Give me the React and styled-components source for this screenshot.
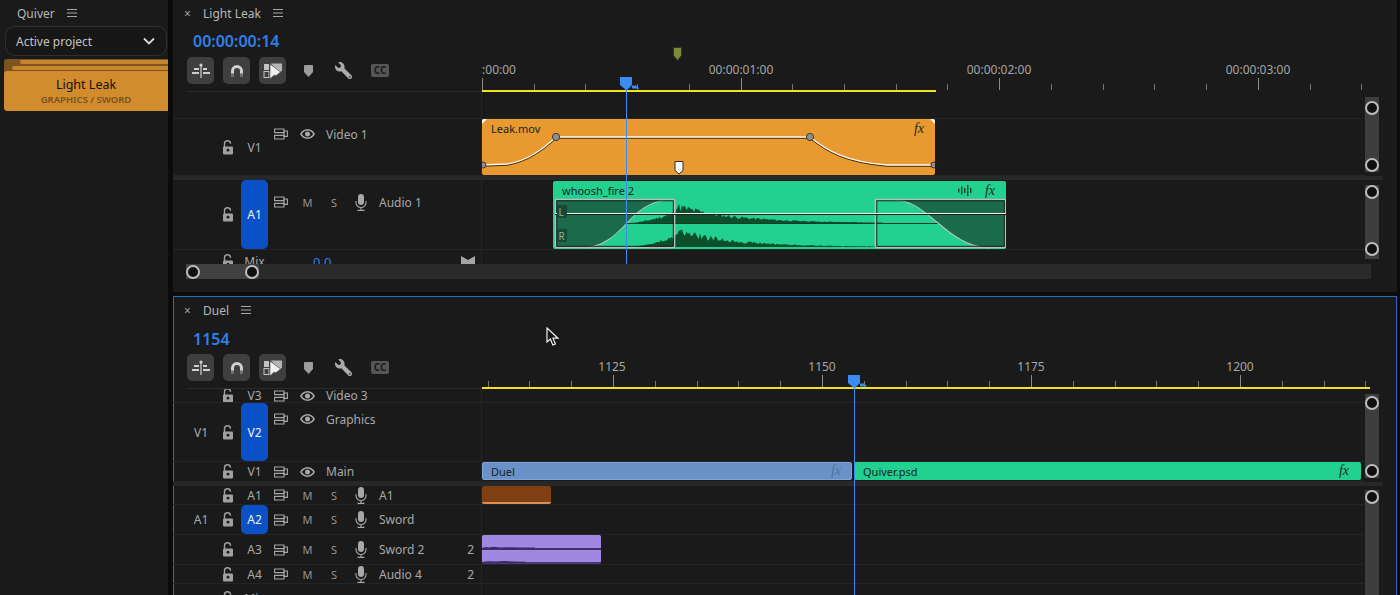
import styled, { createGlobalStyle } from "styled-components";
import { FaWrench } from "react-icons/fa";

const GlobalStyle = createGlobalStyle`
  html, body { margin: 0; padding: 0; background: #0b0b0b; }
  body { font-family: "Noto Sans", "Open Sans", sans-serif; }
`;

const TICK = 51.72;
const FRAME_TICK = 41.8;

// deterministic bumpy waveform, returned as an svg area path
function wavePath(baseline, maxH, seed) {
  let s = seed;
  let d = `M75 ${baseline}`;
  for (let x = 75; x < 330; x += 1.5) {
    s = (s * 9301 + 49297) % 233280;
    const r = 0.55 + 0.45 * (s / 233280);
    const env = x < 122 ? Math.pow((x - 75) / 47, 1.6) * 0.6 : Math.exp(-(x - 122) / 58);
    d += ` L${x} ${(baseline - maxH * env * r).toFixed(1)}`;
  }
  return d + ` L330 ${baseline} Z`;
}

export default function App() {
  return (
    <Screen>
      <GlobalStyle />
      <Quiver>
        <PanelHead $h={26}>
          <QuiverTitle>Quiver</QuiverTitle>
          <MenuIcon />
        </PanelHead>
        <ProjectSelect>
          Active project
          <svg width="12" height="8" viewBox="0 0 12 8"><path d="M1 1.5l5 5 5-5" fill="none" stroke="#d8d8d8" strokeWidth="1.8" /></svg>
        </ProjectSelect>
        <CardStack>
          <CardEdge $inset={16} />
          <CardEdge $inset={8} />
          <Card>
            <CardName>Light Leak</CardName>
            <CardPath>GRAPHICS / SWORD</CardPath>
          </Card>
        </CardStack>
      </Quiver>

      <Timelines>
        <Panel $h={292}>
          <PanelHead $h={26}>
            <CloseMark>×</CloseMark>
            <PanelTitle>Light Leak</PanelTitle>
            <MenuIcon />
          </PanelHead>
          <TimeHeader $h={66}>
            <ToolCell>
              <Timecode>00:00:00:14</Timecode>
              <Tools />
            </ToolCell>
            <Ruler>
              <RulerTicks start={0} step={TICK} major={5} />
              <OliveMarker><svg width="9" height="14" viewBox="0 0 9 14"><path d="M.5.5h8v8l-4 5-4-5z" fill="#7d8b36" stroke="#33361f" /></svg></OliveMarker>
              <RulerLabel $x={17}>:00:00</RulerLabel>
              <RulerLabel $x={259}>00:00:01:00</RulerLabel>
              <RulerLabel $x={517}>00:00:02:00</RulerLabel>
              <RulerLabel $x={776}>00:00:03:00</RulerLabel>
              <WorkArea $w={454} />
            </Ruler>
          </TimeHeader>
          <TrackArea $h={172}>
            <Row $h={27} />
            <Row $h={57} lane={<LeakClip />}>
              <Source />
              <Lock />
              <Target>V1</Target>
              <VideoControls name="Video 1" top={5} />
            </Row>
            <TrackDivider />
            <Row $h={70} lane={<WhooshClip />}>
              <Source />
              <Lock />
              <Target $on>A1</Target>
              <AudioControls name="Audio 1" top={12} />
            </Row>
            <MixRow h={24} full />
            <VBar $top={5} $h={75} $pad="4px 0 0"><Knob /><Knob /></VBar>
            <VBar $top={93} $h={74} $pad="0 0 3px"><Knob /><Knob /></VBar>
          </TrackArea>
          <HScroll>
            <HThumb><Knob /><Knob /></HThumb>
          </HScroll>
          <Playhead x={453} top={77} h={187} />
        </Panel>

        <Panel $h={310} $active>
          <PanelHead $h={28}>
            <CloseMark>×</CloseMark>
            <PanelTitle>Duel</PanelTitle>
            <MenuIcon />
          </PanelHead>
          <TimeHeader $h={65}>
            <ToolCell>
              <Timecode>1154</Timecode>
              <Tools />
            </ToolCell>
            <Ruler>
              <RulerTicks start={5.6} step={FRAME_TICK} major={5} majorAt={3} />
              <RulerLabel $x={130}>1125</RulerLabel>
              <RulerLabel $x={340}>1150</RulerLabel>
              <RulerLabel $x={549}>1175</RulerLabel>
              <RulerLabel $x={758}>1200</RulerLabel>
              <WorkArea $w={888} />
            </Ruler>
          </TimeHeader>
          <TrackArea $h={206}>
            <Row $h={14}>
              <Source />
              <Lock />
              <Target>V3</Target>
              <VideoControls name="Video 3" />
            </Row>
            <Row $h={59}>
              <Source>V1</Source>
              <Lock />
              <Target $on>V2</Target>
              <VideoControls name="Graphics" top={6} />
            </Row>
            <Row $h={20} lane={
              <>
                <DuelClip>
                  <ClipName>Duel</ClipName>
                  <Fx $dim>fx</Fx>
                </DuelClip>
                <PsdClip>
                  <ClipName>Quiver.psd</ClipName>
                  <Fx>fx</Fx>
                </PsdClip>
              </>
            }>
              <Source />
              <Lock />
              <Target>V1</Target>
              <VideoControls name="Main" />
            </Row>
            <TrackDivider />
            <Row $h={19} lane={<BrownClip />}>
              <Source />
              <Lock />
              <Target>A1</Target>
              <AudioControls name="A1" />
            </Row>
            <Row $h={30}>
              <Source>A1</Source>
              <Lock />
              <Target $on>A2</Target>
              <AudioControls name="Sword" />
            </Row>
            <Row $h={30} lane={<PurpleClip />}>
              <Source />
              <Lock />
              <Target>A3</Target>
              <AudioControls name="Sword 2" />
              <Channels>2</Channels>
            </Row>
            <Row $h={19}>
              <Source />
              <Lock />
              <Target>A4</Target>
              <AudioControls name="Audio 4" />
              <Channels>2</Channels>
            </Row>
            <MixRow h={30} />
            <VBar $top={5} $h={84} $pad="2px 0 0"><Knob /><Knob /></VBar>
            <VBar $top={101} $h={120} $pad="0"><Knob /></VBar>
          </TrackArea>
          <Playhead x={681} top={79} h={230} />
          <Cursor>
            <svg width="14" height="20" viewBox="0 0 14 20"><path d="M1 1v14l3.4-3 2.4 6 2.6-1-2.4-5.8H12z" fill="#141414" stroke="#f2f2f2" strokeWidth="1.2" /></svg>
          </Cursor>
        </Panel>
      </Timelines>
    </Screen>
  );
}

function Tools() {
  return (
    <Toolbar>
      <ToolButton $box>
        <svg width="18" height="16" viewBox="0 0 18 16" fill="#cfcfcf">
          <rect x="8.4" y="1" width="1.2" height="14" />
          <circle cx="9" cy="2" r="1.6" />
          <rect x="2" y="5" width="5" height="2" /><rect x="0" y="9" width="7" height="2" />
          <rect x="11" y="5" width="4" height="2" /><rect x="11" y="9" width="7" height="2" />
        </svg>
      </ToolButton>
      <ToolButton $box>
        <svg width="14" height="14" viewBox="0 0 14 14" fill="none">
          <path d="M2.5 13V7a4.5 4.5 0 0 1 9 0v6" stroke="#d0d0d0" strokeWidth="3" />
          <path d="M2.5 13V9.5M11.5 13V9.5" stroke="#6f6f6f" strokeWidth="3" />
        </svg>
      </ToolButton>
      <ToolButton $box>
        <svg width="20" height="18" viewBox="0 0 20 18">
          <rect x="1" y="2" width="5" height="6" fill="#c4c4c4" />
          <rect x="1" y="9.5" width="5" height="6" fill="none" stroke="#c4c4c4" />
          <path d="M8 1.5h11v7l-3 3z" fill="#b5b5b5" />
          <path d="M7 2v15l3.8-3.6 2.6 0L17.5 10z" fill="#f0f0f0" stroke="#3f3f3f" strokeWidth=".6" />
        </svg>
      </ToolButton>
      <ToolButton>
        <svg width="9" height="12" viewBox="0 0 9 12"><path d="M0 1a1 1 0 0 1 1-1h7a1 1 0 0 1 1 1v6l-4.500 5L0 7z" fill="#9c9c9c" /></svg>
      </ToolButton>
      <ToolButton><Wrench /></ToolButton>
      <ToolButton><CcBadge>CC</CcBadge></ToolButton>
    </Toolbar>
  );
}

function RulerTicks({ start, step, major, majorAt = 0 }) {
  const ticks = [];
  for (let i = 0; start + i * step < 888; i++) {
    ticks.push({ x: Math.round(start + i * step), big: (i - majorAt) % major === 0 });
  }
  return (
    <TickLayer width="915" height="65">
      {ticks.map((t) => (
        <line key={t.x} x1={t.x + 0.5} x2={t.x + 0.5} y1={t.big ? 51 : 57} y2="63" stroke={t.big ? "#8a8a8a" : "#757575"} />
      ))}
    </TickLayer>
  );
}

function Row({ $h, lane, children }) {
  return (
    <RowBox $h={$h}>
      <RowHeader>{children}</RowHeader>
      <Lane>{lane}</Lane>
    </RowBox>
  );
}

function MixRow({ h, full }) {
  return (
    <Row $h={h}>
      <Source />
      <Lock />
      <Target>Mix</Target>
      {full && <MixValue>0.0</MixValue>}
      {full && (
        <MixEnd>
          <svg width="14" height="12" viewBox="0 0 14 12"><path d="M0 0l7 4 7-4v12H0z" fill="#a5a5a5" /></svg>
        </MixEnd>
      )}
    </Row>
  );
}

function VideoControls({ name, top }) {
  return (
    <Controls $top={top}>
      <Slot $w={26}><SyncIcon /></Slot>
      <Slot $w={26}><EyeIcon /></Slot>
      <TrackName $gap={6}>{name}</TrackName>
    </Controls>
  );
}

function AudioControls({ name, top }) {
  return (
    <Controls $top={top}>
      <Slot $w={26}><SyncIcon /></Slot>
      <Slot $w={27} $letter>M</Slot>
      <Slot $w={26} $letter>S</Slot>
      <Slot $w={28}><MicIcon /></Slot>
      <TrackName $gap={4}>{name}</TrackName>
    </Controls>
  );
}

function LeakClip() {
  const curve = "M0 46 L25 45 C45 42 60 31 74 18 L328 18 C345 32 365 43 405 46 L453 46";
  return (
    <OrangeClip>
      <ClipHead>
        <ClipName>Leak.mov</ClipName>
        <Fx>fx</Fx>
      </ClipHead>
      <ClipArt width="453" height="56" viewBox="0 0 453 56">
        <path d="M0 0h5L0 5zM453 0h-5l5 5z" fill="#f4f4f4" />
        <path d={curve} transform="translate(0 1)" fill="none" stroke="#3a2a12" strokeWidth="1.4" />
        <path d={curve} fill="none" stroke="#fbf7ea" strokeWidth="1.4" />
        <circle cx="74" cy="18" r="3.6" fill="#8f8f8f" stroke="#3a3a3a" />
        <circle cx="328" cy="18" r="3.6" fill="#8f8f8f" stroke="#3a3a3a" />
        <circle cx="1" cy="46" r="3" fill="#8f8f8f" stroke="#3a3a3a" />
        <circle cx="452" cy="46" r="3" fill="#8f8f8f" stroke="#3a3a3a" />
        <path d="M193 42.5h8v9l-4 3.500-4-3.500z" fill="#f7f7f7" stroke="#2a2a2a" />
      </ClipArt>
    </OrangeClip>
  );
}

function WhooshClip() {
  return (
    <GreenClip>
      <ClipHead>
        <ClipName>whoosh_fire 2</ClipName>
        <ClipFlags>
          <svg width="14" height="11" viewBox="0 0 14 11" fill="#14442f">
            <rect x="0" y="3.500" width="1.400" height="4" /><rect x="3" y="1.500" width="1.400" height="8" />
            <rect x="6" y="3" width="1.400" height="5" /><rect x="9" y="0" width="1.400" height="11" />
            <rect x="12" y="3" width="1.400" height="5" />
          </svg>
          <Fx>fx</Fx>
        </ClipFlags>
      </ClipHead>
      <ClipArt width="453" height="68" viewBox="0 0 453 68">
        <path d={wavePath(42, 22, 11)} fill="#0c4f2b" />
        <path d={wavePath(66, 21, 47)} fill="#0c4f2b" />
        <rect x="2" y="42" width="451" height="1" fill="#0d3b27" />
        <path d="M2 19H112C95 22 85 30 74 42 62 55 50 66 30 67H2Z" fill="#1c6a4c" />
        <path d="M339 19C360 19 370 30 385 42 400 55 415 66 436 67H452V19Z" fill="#1c6a4c" />
        <path d="M112 19C95 22 85 30 74 42 62 55 50 66 30 67" fill="none" stroke="#a8c9ba" strokeWidth="1.100" />
        <path d="M339 19C360 19 370 30 385 42 400 55 415 66 436 67" fill="none" stroke="#a8c9ba" strokeWidth="1.100" />
        <rect x="2.500" y="18.500" width="119" height="48" rx="1" fill="none" stroke="#bdbdbd" strokeWidth="1.600" />
        <rect x="3.800" y="19.800" width="116.500" height="45.500" fill="none" stroke="#0f1a15" strokeWidth=".9" />
        <rect x="322.500" y="18.500" width="130" height="48" rx="1" fill="none" stroke="#bdbdbd" strokeWidth="1.600" />
        <rect x="323.800" y="19.800" width="127.500" height="45.500" fill="none" stroke="#0f1a15" strokeWidth=".9" />
        <rect x="2" y="33" width="451" height="1" fill="#1a1a1a" />
        <rect x="2" y="32" width="451" height="1" fill="#f1f1f1" />
        <rect x="4" y="24" width="10" height="13" fill="#174a36" />
        <rect x="4" y="48" width="10" height="13" fill="#174a36" />
        <ChannelText x="5.500" y="35">L</ChannelText>
        <ChannelText x="5.500" y="59">R</ChannelText>
      </ClipArt>
    </GreenClip>
  );
}

function PurpleClip() {
  return (
    <VioletClip>
      <ClipArt width="119" height="29" viewBox="0 0 119 29">
        <path d="M0 13l4-1 3 .6 5-.8 6 .8 9-.4 12 .2 14 .2V14H0zM0 27l6-.8 7 .4 9-.6 10 .6 12 .2V28H0z" fill="#3a2b63" />
      </ClipArt>
    </VioletClip>
  );
}

function SyncIcon() {
  return (
    <svg width="14" height="12" viewBox="0 0 14 12" fill="none" stroke="#a8a8a8" strokeWidth="1.100">
      <path d="M.6 1h9.400v3.600H.6zM.6 7.400h9.400V11H.6z" />
      <path d="M10 3h3.400v5.400H10z" />
    </svg>
  );
}

function EyeIcon() {
  return (
    <svg width="15" height="10" viewBox="0 0 15 10" fill="#a8a8a8">
      <path fillRule="evenodd" d="M7.500 0C4 0 1.400 2.300 0 5c1.400 2.700 4 5 7.500 5S13.600 7.700 15 5C13.600 2.300 11 0 7.500 0zm0 1.500C5.200 1.500 3.200 2.900 1.900 5c1.300 2.100 3.300 3.500 5.600 3.500S11.800 7.100 13.100 5C11.800 2.900 9.800 1.500 7.500 1.500z" />
      <circle cx="7.500" cy="5" r="2.500" />
    </svg>
  );
}

function MicIcon() {
  return (
    <svg width="12" height="17" viewBox="0 0 12 17" fill="none" stroke="#a8a8a8">
      <rect x="3" y="0" width="6" height="11" rx="3" fill="#a8a8a8" stroke="none" />
      <path d="M1 7v1.500a5 5 0 0 0 10 0V7M6 13.500V16M2.500 16.400h7" strokeWidth="1.100" />
    </svg>
  );
}

function MenuIcon() {
  return (
    <MenuGlyph width="10" height="8" viewBox="0 0 10 8">
      <path d="M0 .5h10M0 4h10M0 7.500h10" stroke="#a8a8a8" />
    </MenuGlyph>
  );
}

function Lock() {
  return (
    <LockSlot>
      <svg width="12" height="15" viewBox="0 0 12 15">
        <path d="M2.500 7V3.800a3 3 0 0 1 6 0" fill="none" stroke="#a0a0a0" strokeWidth="1.400" />
        <rect x="1" y="6.500" width="10" height="8" rx="1" fill="#a0a0a0" />
        <circle cx="6" cy="10.200" r="1.400" fill="#1a1a1a" />
      </svg>
    </LockSlot>
  );
}

function Playhead({ x, top, h }) {
  return (
    <PlayLine $x={x} $top={top} $h={h}>
      <PlayCap width="20" height="14" viewBox="0 0 20 14">
        <path d="M0 0h12v8l-5.500 5.500L0 8z" fill="#3b8bf0" />
        <path d="M12 8.500h4l3.500 3h-7.500z" fill="#3b8bf0" />
      </PlayCap>
    </PlayLine>
  );
}

const Screen = styled.div`
  width: 1400px;
  height: 595px;
  overflow: hidden;
  display: flex;
  gap: 5px;
  background: #0b0b0b;
`;

const Quiver = styled.aside`
  width: 168px;
  flex: none;
  background: #1a1a1a;
  display: flex;
  flex-direction: column;
`;

const PanelHead = styled.header`
  height: ${(p) => p.$h}px;
  flex: none;
  display: flex;
  align-items: center;
  color: #b5b5b5;
  font-size: 12px;
`;

const QuiverTitle = styled.span`
  margin-left: 17px;
  font-size: 12px;
  color: #b8b8b8;
`;

const MenuGlyph = styled.svg`
  margin-left: 12px;
`;

const ProjectSelect = styled.div`
  margin-left: 5px;
  width: 162px;
  height: 30px;
  box-sizing: border-box;
  border: 1px solid #303030;
  border-radius: 10px;
  background: #171717;
  display: flex;
  align-items: center;
  justify-content: space-between;
  padding: 0 11px 0 10px;
  color: #c4c4c4;
  font-size: 12px;
`;

const CardStack = styled.div`
  margin: 3px 0 0 4px;
  width: 164px;
  background: #7d5420;
  border-radius: 3px 0 0 3px;
  display: flex;
  flex-direction: column;
  gap: 1px;
`;

const CardEdge = styled.div`
  height: 4px;
  margin-left: ${(p) => p.$inset}px;
  margin-top: 1px;
  background: #c6862e;
  border-radius: 2px 0 0 2px;
`;

const Card = styled.div`
  height: 40px;
  background: #d18c2e;
  border-radius: 3px 0 0 4px;
  display: flex;
  flex-direction: column;
  align-items: center;
  justify-content: center;
`;

const CardName = styled.div`
  font-size: 12.500px;
  line-height: 17px;
  color: #140e04;
`;

const CardPath = styled.div`
  font-size: 9.500px;
  font-weight: 600;
  line-height: 13px;
  color: #76511d;
`;

const Timelines = styled.main`
  width: 1224px;
  flex: none;
  display: flex;
  flex-direction: column;
  gap: 4px;
`;

const Panel = styled.section`
  position: relative;
  flex: none;
  height: ${(p) => p.$h}px;
  overflow: hidden;
  background: #1a1a1a;
  box-shadow: ${(p) => (p.$active ? "inset 0 0 0 1px #2a6cbb" : "none")};
`;

const CloseMark = styled.span`
  margin-left: 11px;
  width: 8px;
  font-size: 12px;
  color: #a0a0a0;
`;

const PanelTitle = styled.span`
  margin-left: 11px;
  font-size: 12px;
  color: #b8b8b8;
`;

const TimeHeader = styled.div`
  display: grid;
  grid-template-columns: 309px 1fr;
  height: ${(p) => p.$h}px;
`;

const ToolCell = styled.div`
  margin-left: 14px;
  box-sizing: border-box;
  padding-bottom: 7px;
  border-bottom: 1px solid #2a2a2a;
  display: flex;
  flex-direction: column;
  justify-content: space-between;
`;

const Timecode = styled.div`
  height: 30px;
  padding-left: 6px;
  line-height: 30px;
  font-size: 16px;
  font-weight: 600;
  color: #2f80e8;
`;

const Toolbar = styled.div`
  display: flex;
  gap: 9px;
`;

const ToolButton = styled.div`
  width: 27px;
  height: 27px;
  display: flex;
  align-items: center;
  justify-content: center;
  border-radius: 5px;
  background: ${(p) => (p.$box ? "#3f3f3f" : "transparent")};
`;

const Wrench = styled(FaWrench)`
  width: 17px;
  height: 17px;
  margin-right: 2px;
  color: #ababab;
  transform: scaleX(-1);
`;

const CcBadge = styled.span`
  width: 18px;
  height: 13px;
  margin-right: 1px;
  border-radius: 2px;
  background: #565656;
  color: #1a1a1a;
  font-size: 10px;
  line-height: 13px;
  font-weight: 700;
  text-align: center;
`;

const Ruler = styled.div`
  position: relative;
`;

const TickLayer = styled.svg`
  position: absolute;
  left: 0;
  bottom: 0;
`;

const RulerLabel = styled.span`
  position: absolute;
  left: ${(p) => p.$x}px;
  bottom: 14px;
  transform: translateX(-50%);
  font-size: 12px;
  line-height: 16px;
  color: #a6a6a6;
`;

const WorkArea = styled.div`
  position: absolute;
  left: 0;
  bottom: 0;
  width: ${(p) => p.$w}px;
  height: 2px;
  background: #efe41d;
`;

const OliveMarker = styled.div`
  position: absolute;
  left: 191px;
  top: 18px;
  height: 14px;
`;

const TrackArea = styled.div`
  position: relative;
  height: ${(p) => p.$h}px;
  overflow: hidden;
`;

const RowBox = styled.div`
  height: ${(p) => p.$h}px;
  box-sizing: border-box;
  margin-right: 32px;
  display: grid;
  grid-template-columns: 309px 1fr;
  grid-template-rows: minmax(0, 1fr);
  border-bottom: 1px solid #252525;
  overflow: hidden;
`;

const RowHeader = styled.div`
  display: flex;
  align-items: center;
  min-height: 0;
  color: #a8a8a8;
  font-size: 12px;
  border-right: 1px solid #252525;
`;

const Lane = styled.div`
  position: relative;
`;

const TrackDivider = styled.div`
  height: 4px;
  margin-right: 14px;
  background: #282828;
`;

const Source = styled.span`
  width: 28px;
  padding-left: 14px;
  flex: none;
  text-align: center;
`;

const LockSlot = styled.span`
  width: 26px;
  flex: none;
  display: flex;
  justify-content: center;
`;

const Target = styled.span`
  width: 27px;
  flex: none;
  align-self: stretch;
  display: flex;
  align-items: center;
  justify-content: center;
  border-radius: 5px;
  background: ${(p) => (p.$on ? "#0a50c6" : "transparent")};
  color: ${(p) => (p.$on ? "#f0f0f0" : "inherit")};
`;

const Controls = styled.div`
  display: flex;
  align-items: center;
  height: 20px;
  flex: none;
  align-self: ${(p) => (p.$top == null ? "center" : "flex-start")};
  margin-top: ${(p) => p.$top ?? 0}px;
`;

const Slot = styled.span`
  width: ${(p) => p.$w}px;
  flex: none;
  display: flex;
  justify-content: center;
  font-size: 11px;
  color: #959595;
`;

const TrackName = styled.span`
  margin-left: ${(p) => p.$gap}px;
  font-size: 12px;
  white-space: nowrap;
`;

const Channels = styled.span`
  margin-left: auto;
  padding-right: 7px;
`;

const MixValue = styled.span`
  margin-left: 45px;
  font-size: 13px;
  color: #2f80e8;
`;

const MixEnd = styled.span`
  margin-left: auto;
  padding-right: 6px;
  display: flex;
`;

const VBar = styled.div`
  position: absolute;
  right: 18px;
  top: ${(p) => p.$top}px;
  width: 14px;
  height: ${(p) => p.$h}px;
  box-sizing: border-box;
  padding: ${(p) => p.$pad};
  background: #3e3e3e;
  display: flex;
  flex-direction: column;
  justify-content: space-between;
`;

const Knob = styled.span`
  width: 14px;
  height: 14px;
  box-sizing: border-box;
  flex: none;
  border: 2px solid #bdbdbd;
  border-radius: 50%;
  background: #101010;
`;

const HScroll = styled.div`
  margin: 0 26px 0 13px;
  height: 15px;
  background: #2a2a2a;
`;

const HThumb = styled.div`
  width: 73px;
  height: 15px;
  background: #404040;
  display: flex;
  align-items: center;
  justify-content: space-between;
`;

const Clip = styled.div`
  position: absolute;
  top: 0;
  box-sizing: border-box;
  border-radius: 2px;
  overflow: hidden;
`;

const OrangeClip = styled(Clip)`
  left: 0;
  width: 453px;
  height: 56px;
  background: #e89a30;
`;

const GreenClip = styled(Clip)`
  top: 1px;
  left: 71px;
  width: 453px;
  height: 68px;
  background: #22d08f;
`;

const DuelClip = styled(Clip)`
  left: 0;
  width: 370px;
  height: 18px;
  display: flex;
  align-items: center;
  justify-content: space-between;
  padding: 0 10px 0 8px;
  background: #6a92c8;
  border: 1px solid #7ea4d6;
`;

const PsdClip = styled(Clip)`
  left: 372px;
  width: 507px;
  height: 18px;
  display: flex;
  align-items: center;
  justify-content: space-between;
  padding: 0 12px 0 9px;
  background: #22d08f;
`;

const BrownClip = styled(Clip)`
  left: 0;
  width: 69px;
  height: 18px;
  background: #7f3f12;
  border-bottom: 2px solid #d98f55;
`;

const VioletClip = styled(Clip)`
  left: 0;
  width: 119px;
  height: 29px;
  background: linear-gradient(
    #a088e2 0 13px,
    #3f2f6a 13px 15px,
    #a088e2 15px 27px,
    #4a3a7a 27px
  );
`;

const ClipHead = styled.div`
  position: relative;
  z-index: 1;
  display: flex;
  align-items: center;
  justify-content: space-between;
  height: 19px;
  padding: 0 11px 0 9px;
`;

const ClipName = styled.span`
  font-size: 11px;
  color: #14241f;
  white-space: nowrap;
`;

const ClipFlags = styled.span`
  display: flex;
  align-items: center;
  gap: 13px;
`;

const Fx = styled.span`
  font-family: "Liberation Serif", serif;
  font-style: italic;
  font-size: 14px;
  line-height: 14px;
  color: ${(p) => (p.$dim ? "#4f73a6" : "#1c2a20")};
`;

const ClipArt = styled.svg`
  position: absolute;
  inset: 0;
`;

const ChannelText = styled.text`
  font-size: 10px;
  fill: #8db6a2;
`;

const PlayLine = styled.div`
  position: absolute;
  left: ${(p) => p.$x}px;
  top: ${(p) => p.$top}px;
  width: 1px;
  height: ${(p) => p.$h}px;
  background: #3b8bf0;
`;

const PlayCap = styled.svg`
  position: absolute;
  left: -6px;
  top: 0;
`;

const Cursor = styled.div`
  position: absolute;
  left: 373px;
  top: 31px;
`;
